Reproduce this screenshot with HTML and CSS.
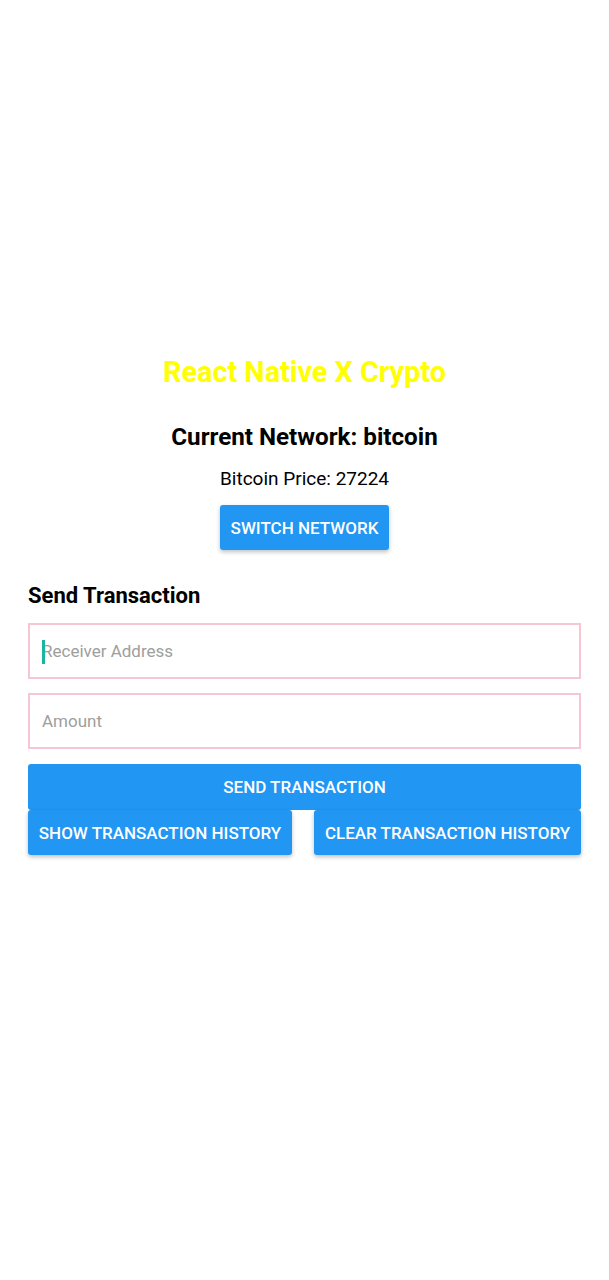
FILE: index.html
```html
<!DOCTYPE html>
<html>
<head>
<meta charset="utf-8">
<link rel="stylesheet" href="styles.css">
</head>
<body>
<main class="screen">
  <h1 class="title">React Native X Crypto</h1>
  <h2 class="network">Current Network: bitcoin</h2>
  <p class="price">Bitcoin Price: 27224</p>
  <div class="center-row">
    <button class="btn btn-switch">Switch Network</button>
  </div>
  <h3 class="section-title">Send Transaction</h3>
  <div class="field"><span class="caret"></span><span class="placeholder">Receiver Address</span></div>
  <div class="field"><span class="placeholder">Amount</span></div>
  <button class="btn btn-full">Send Transaction</button>
  <div class="btn-row">
    <button class="btn">Show Transaction History</button>
    <button class="btn">Clear Transaction History</button>
  </div>
</main>
</body>
</html>
```
FILE: styles.css
```css
* { box-sizing: border-box; }
html, body { margin: 0; padding: 0; background: #ffffff; }
body {
  font-family: Roboto, "Liberation Sans", sans-serif;
  color: #000;
  width: 609px;
  height: 1280px;
}
.screen {
  padding: 353px 28px 0 28px;
  display: flex;
  flex-direction: column;
}
.title {
  margin: 0;
  text-align: center;
  font-size: 28.8px;
  line-height: 38px;
  font-weight: 700;
  color: #ffff00;
}
.network {
  margin: 30px 0 0 0;
  text-align: center;
  font-size: 24.2px;
  line-height: 32px;
  font-weight: 700;
}
.price {
  margin: 13px 0 0 0;
  text-align: center;
  font-size: 19px;
  line-height: 26px;
}
.center-row {
  display: flex;
  justify-content: center;
  margin-top: 13px;
}
.btn {
  border: none;
  background: #2196f3;
  color: #fff;
  font-family: Roboto, "Liberation Sans", sans-serif;
  font-weight: 500;
  font-size: 17px;
  text-transform: uppercase;
  border-radius: 3px;
  height: 45px;
  padding: 0 10px;
  box-shadow: 0 2px 4px rgba(0,0,0,0.25);
}
.btn-switch { width: 169px; padding: 0; }
.section-title {
  margin: 31px 0 0 0;
  font-size: 22px;
  line-height: 29px;
  font-weight: 700;
}
.field {
  margin-top: 13px;
  height: 56px;
  border: 2px solid #f6c7d2;
  display: flex;
  align-items: center;
  padding-left: 12px;
  position: relative;
}
.field + .field { margin-top: 14px; }
.placeholder {
  font-size: 17px;
  color: #9e9e9e;
}
.caret {
  position: absolute;
  left: 12px;
  top: 15px;
  width: 3px;
  height: 24px;
  background: #1bb59e;
}
.btn-full {
  margin-top: 15px;
  width: 100%;
  height: 46px;
  box-shadow: none;
}
.btn-row {
  display: flex;
  justify-content: space-between;
}
.btn-row .btn {
  height: 45px;
}
.btn-row .btn:first-child { width: 264px; }
.btn-row .btn:last-child { width: 267px; }
```
